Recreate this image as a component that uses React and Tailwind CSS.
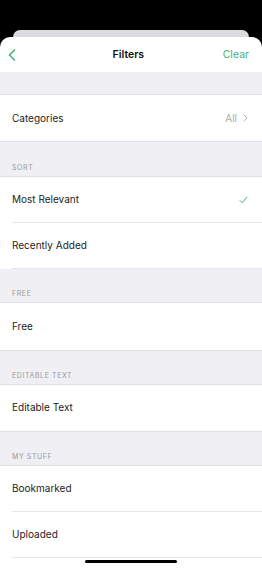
const sections = [
  { label: 'SORT', rows: [{ title: 'Most Relevant', checked: true }, { title: 'Recently Added' }] },
  { label: 'FREE', rows: [{ title: 'Free' }] },
  { label: 'EDITABLE TEXT', rows: [{ title: 'Editable Text' }] },
  { label: 'MY STUFF', rows: [{ title: 'Bookmarked' }, { title: 'Uploaded' }] },
];

export default function App() {
  return (
    <div
      className="relative w-[262px] h-[568px] overflow-hidden bg-black pt-[30px] flex flex-col"
      style={{ fontFamily: 'Inter, "Liberation Sans", sans-serif' }}
    >
      <div className="mx-[13px] h-[7px] bg-[#dcdce0] rounded-t-[9px] shrink-0" />
      <div className="flex-1 bg-white rounded-t-[10px] flex flex-col overflow-hidden">
        <Header />
        <div className="h-[23px] bg-[#efeff4] border-b border-[#e0e0e4] shrink-0" />
        <div className="h-[47px] flex items-center justify-between pl-[12px] pr-[14px] border-b border-[#e0e0e4] shrink-0">
          <span className="text-[10px] text-[#222]">Categories</span>
          <span className="flex items-center gap-[6px] text-[10px] text-[#a9a9ad]">
            All
            <svg width="5" height="8" viewBox="0 0 5 8" fill="none">
              <path d="M0.8 0.8L4 4L0.8 7.2" stroke="#a9a9ad" strokeWidth="0.9" />
            </svg>
          </span>
        </div>
        {sections.map((s, i) => (
          <Section key={s.label} first={i === 0} {...s} />
        ))}
      </div>
      <div className="absolute left-[85px] bottom-[5px] w-[92px] h-[3px] rounded-full bg-black" />
    </div>
  );
}

function Header() {
  return (
    <div className="h-[35px] flex items-center justify-between px-[8px] pr-[13px] shrink-0">
      <svg width="8" height="12" viewBox="0 0 8 12" fill="none" className="mt-[1px]">
        <path d="M6.5 1L1.5 6L6.5 11" stroke="#46b07c" strokeWidth="1.6" strokeLinecap="round" strokeLinejoin="round" />
      </svg>
      <span className="text-[10.5px] font-semibold text-[#111] ml-[18px]">Filters</span>
      <span className="text-[10.5px] text-[#46b07c]">Clear</span>
    </div>
  );
}

function Section({ label, rows, first }) {
  const single = rows.length === 1;
  return (
    <div className="shrink-0">
      <div
        className={
          (first ? 'h-[35px] ' : 'h-[34px] ') +
          'bg-[#efeff4] border-b border-[#e0e0e4] flex items-end pl-[12px] pb-[5px]'
        }
      >
        <span className="text-[7px] tracking-[0.6px] text-[#9a9a9f] leading-none">{label}</span>
      </div>
      {rows.map((r) => (
        <div key={r.title} className={single ? 'border-b border-[#e0e0e4]' : 'pl-[12px]'}>
          <div
            className={
              'flex items-center justify-between pr-[14px] ' +
              (single ? 'h-[46.5px] pl-[12px]' : 'h-[46px] border-b border-[#e6e6e9]')
            }
          >
            <span className="text-[10px] text-[#222]">{r.title}</span>
            {r.checked && (
              <svg width="9" height="8" viewBox="0 0 9 8" fill="none">
                <path d="M0.8 4.3L3.2 6.8L8.2 0.8" stroke="#46b07c" strokeWidth="1" />
              </svg>
            )}
          </div>
        </div>
      ))}
    </div>
  );
}
